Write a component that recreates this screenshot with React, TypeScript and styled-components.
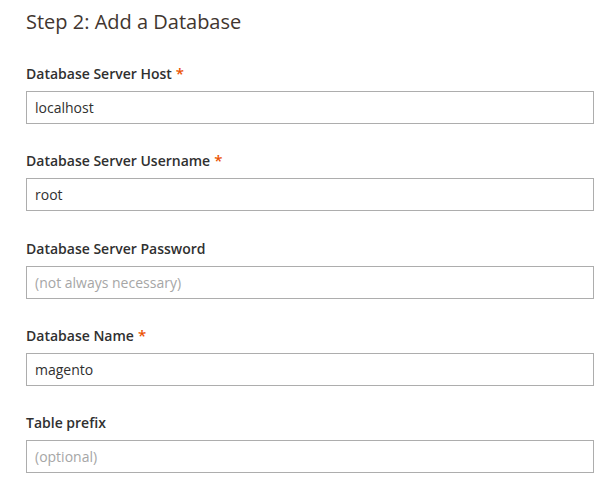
import styled, { createGlobalStyle } from "styled-components";

const GlobalStyle = createGlobalStyle`
    body {
        margin: 0;
        background: #fff;
        font-family: "Open Sans", "Liberation Sans", sans-serif;
    }
`

const Page = styled.div`
    padding: 10px 16px 0 26px;
    width: 568px;
`

const Title = styled.h2`
    margin: 0 0 30px;
    font-size: 20px;
    line-height: 24px;
    font-weight: 400;
    color: #41362f;
`

const Field = styled.div`
    display: flex;
    flex-direction: column;
    margin-bottom: 27.25px;
`

const Label = styled.label`
    font-size: 14px;
    line-height: 20px;
    height: 20px;
    font-weight: 600;
    color: #303030;
    margin-bottom: 7px;
`

const Required = styled.span`
    color: #eb5202;
    margin-left: 4px;
    font-size: 15px;
    line-height: 1;
`

const Input = styled.input`
    box-sizing: border-box;
    height: 33px;
    width: 100%;
    margin: 0;
    padding: 0 8px;
    border: 1px solid #adadad;
    border-radius: 0;
    font-family: inherit;
    font-size: 14px;
    color: #303030;
    background: #fff;
    outline: none;
    &::placeholder {
        color: #a6a6a6;
    }
`

const fields = [
    { label: "Database Server Host", required: true, value: "localhost" },
    { label: "Database Server Username", required: true, value: "root" },
    { label: "Database Server Password", required: false, placeholder: "(not always necessary)" },
    { label: "Database Name", required: true, value: "magento" },
    { label: "Table prefix", required: false, placeholder: "(optional)" },
];

export default function App() {
    return (
        <Page>
            <GlobalStyle />
            <Title>Step 2: Add a Database</Title>
            {fields.map((f, idx) => (
                <Field key={idx}>
                    <Label htmlFor={`field-${idx}`}>
                        {f.label}
                        {f.required && <Required>*</Required>}
                    </Label>
                    <Input
                        id={`field-${idx}`}
                        type="text"
                        defaultValue={f.value}
                        placeholder={f.placeholder}
                    />
                </Field>
            ))}
        </Page>
    );
}
